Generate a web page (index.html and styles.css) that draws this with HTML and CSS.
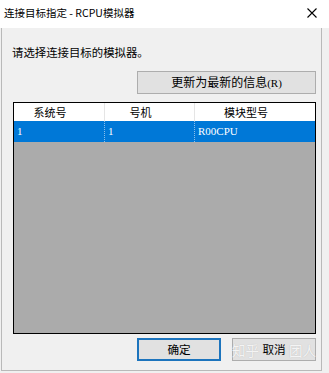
FILE: index.html
```html
<!DOCTYPE html>
<html lang="zh-CN">
<head>
<meta charset="utf-8">
<title>连接目标指定 - RCPU模拟器</title>
<link rel="stylesheet" href="styles.css">
</head>
<body>
<div class="window">
  <div class="titlebar">
    <span class="title">连接目标指定 - RCPU模拟器</span>
    <svg class="close" width="10" height="10" viewBox="0 0 10 10"><path d="M0.5 0.5 L9.5 9.5 M9.5 0.5 L0.5 9.5" stroke="#000" stroke-width="1.1" fill="none"/></svg>
  </div>
  <div class="frame">
    <p class="prompt">请选择连接目标的模拟器。</p>
    <div class="refresh-row">
      <button class="btn refresh">更新为最新的信息<span class="mn">(R)</span></button>
    </div>
    <div class="table">
      <div class="thead">
        <div class="th c1">系统号</div>
        <div class="th c2">号机</div>
        <div class="th c3">模块型号</div>
      </div>
      <div class="row sel">
        <div class="td c1">1</div>
        <div class="td c2">1</div>
        <div class="td c3">R00CPU</div>
      </div>
    </div>
    <div class="actions">
      <button class="btn default">确定</button>
      <button class="btn">取消</button>
      <span class="wm"><span>知乎</span><span>团人</span></span>
    </div>
  </div>
</div>
</body>
</html>
```
FILE: styles.css
```css
html, body {
  margin: 0;
  padding: 0;
}
body {
  width: 329px;
  height: 373px;
  overflow: hidden;
  background: #f0f0f0;
  font-family: "Noto Sans CJK SC", "Microsoft YaHei", sans-serif;
  color: #000;
}
.window {
  width: 329px;
  height: 373px;
}
.titlebar {
  height: 28px;
  box-sizing: border-box;
  background: #fff;
  display: flex;
  align-items: center;
  justify-content: space-between;
  padding: 0 12px 2px 4px;
}
.title {
  font-size: 10.5px;
  line-height: 14px;
}
.close {
  display: block;
}
.frame {
  margin-left: 1px;
  width: 321px;
  height: 343px;
  box-sizing: border-box;
  border: 1px solid #b9b9b9;
  border-top: none;
  padding: 0 5px 0 11px;
  display: flex;
  flex-direction: column;
}
.prompt {
  margin: 16px 0 0 -1px;
  font-size: 11.4px;
  line-height: 16px;
}
.refresh-row {
  margin-top: 11px;
  display: flex;
  justify-content: flex-end;
}
.btn {
  height: 23px;
  box-sizing: border-box;
  border: 1px solid #adadad;
  background: #e1e1e1;
  font-family: "Noto Sans CJK SC", sans-serif;
  font-size: 11.6px;
  line-height: 19px;
  padding: 0;
  color: #000;
  width: 84px;
}
.refresh {
  width: 179px;
  font-size: 12px;
}
.mn {
  font-family: "Liberation Serif", serif;
  font-size: 11px;
}
.table {
  margin-top: 8px;
  height: 232px;
  box-sizing: border-box;
  border: 1px solid #000;
  background: #ababab;
  display: flex;
  flex-direction: column;
}
.thead {
  display: flex;
  height: 18px;
  background: #fff;
}
.th {
  font-size: 11px;
  line-height: 18px;
  text-align: center;
  padding-right: 18px;
  box-sizing: border-box;
  border-right: 1px solid #e5e5e5;
}
.c1 { width: 91px; }
.c2 { width: 90px; }
.c3 { flex: 1; border-right: none; }
.row {
  display: flex;
  height: 21px;
}
.sel {
  background: #0078d7;
  color: #fff;
}
.td {
  font-family: "Liberation Serif", serif;
  font-size: 11px;
  line-height: 21px;
  padding-left: 3px;
  box-sizing: border-box;
  border-right: 1px dotted #8cbfea;
}
.td.c3 { border-right: none; }
.actions {
  position: relative;
  margin-top: 4px;
  display: flex;
  justify-content: flex-end;
  gap: 11px;
}
.default {
  border: 2px solid #1c74bd;
}
.wm {
  position: absolute;
  right: 0;
  top: 2px;
  width: 84px;
  display: flex;
  justify-content: space-between;
  font-size: 13.5px;
  line-height: 20px;
  color: rgba(255, 255, 255, 0.85);
  text-shadow: 0 0 1px #b5b5b5;
  pointer-events: none;
}
```
